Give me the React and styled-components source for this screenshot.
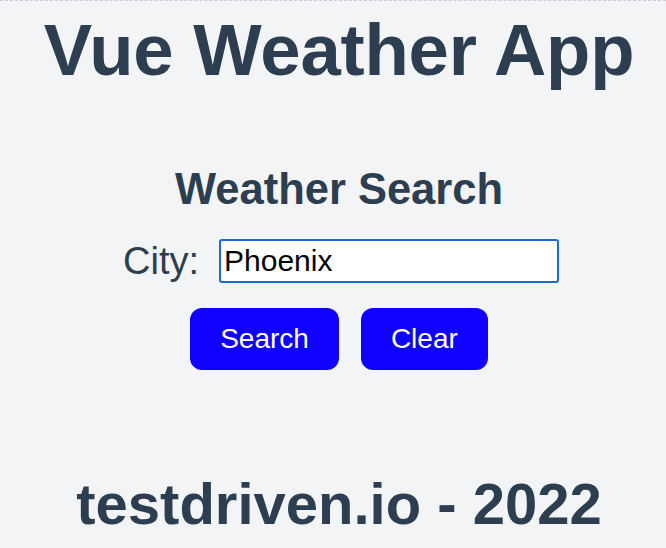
import React, { useState } from "react";
import styled, { createGlobalStyle } from "styled-components";

const GlobalStyle = createGlobalStyle`
  html, body {
    margin: 0;
    padding: 0;
    background-color: #f3f4f6;
  }
  body {
    font-family: "Liberation Sans", Arial, Helvetica, sans-serif;
    color: #2c3e50;
  }
`;

const App = () => {
  const [city, setCity] = useState("Phoenix");

  return (
    <Page>
      <GlobalStyle />
      <Title>Vue Weather App</Title>

      <Search>
        <h2>Weather Search</h2>
        <div className="search__row">
          <label htmlFor="city">City:</label>
          <input
            id="city"
            type="text"
            value={city}
            onChange={(e) => setCity(e.target.value)}
          />
        </div>
        <div className="search__buttons">
          <Button>Search</Button>
          <Button onClick={() => setCity("")}>Clear</Button>
        </div>
      </Search>

      <Footer>testdriven.io - 2022</Footer>
    </Page>
  );
};

const Page = styled.div`
  display: flex;
  flex-direction: column;
  align-items: center;
  height: 548px;
  box-sizing: border-box;
  padding-left: 12px;
  border-top: 1px dashed #c9cad6;
  overflow: hidden;
`;

const Title = styled.h1`
  margin: 8px 0 0;
  font-size: 72.5px;
  font-weight: 700;
  line-height: 82px;
  letter-spacing: -0.2px;
`;

const Search = styled.section`
  display: flex;
  flex-direction: column;
  align-items: center;
  margin-top: 73px;

  h2 {
    margin: 0;
    font-size: 43.5px;
    font-weight: 700;
    line-height: 50px;
  }

  .search__row {
    display: flex;
    align-items: center;
    gap: 20px;
    margin-top: 25px;
    margin-left: 4px;

    label {
      font-size: 38px;
      line-height: 44px;
    }

    input {
      width: 340px;
      height: 44px;
      box-sizing: border-box;
      padding: 0 3px;
      font-family: "Liberation Sans", Arial, sans-serif;
      font-size: 30px;
      color: #000;
      background: #fff;
      border: 2px solid #1c68d8;
      border-radius: 3px;
      outline: none;
    }
  }

  .search__buttons {
    display: flex;
    gap: 22px;
    margin-top: 25px;
  }
`;

const Button = styled.button`
  height: 62px;
  padding: 0 30px;
  font-family: "Liberation Sans", Arial, sans-serif;
  font-size: 28px;
  color: #fff;
  background-color: #1000ff;
  border: none;
  border-radius: 12px;
  cursor: pointer;
`;

const Footer = styled.footer`
  margin-top: auto;
  margin-bottom: 12px;
  font-size: 58px;
  font-weight: 700;
  line-height: 64px;
`;

export default App;
